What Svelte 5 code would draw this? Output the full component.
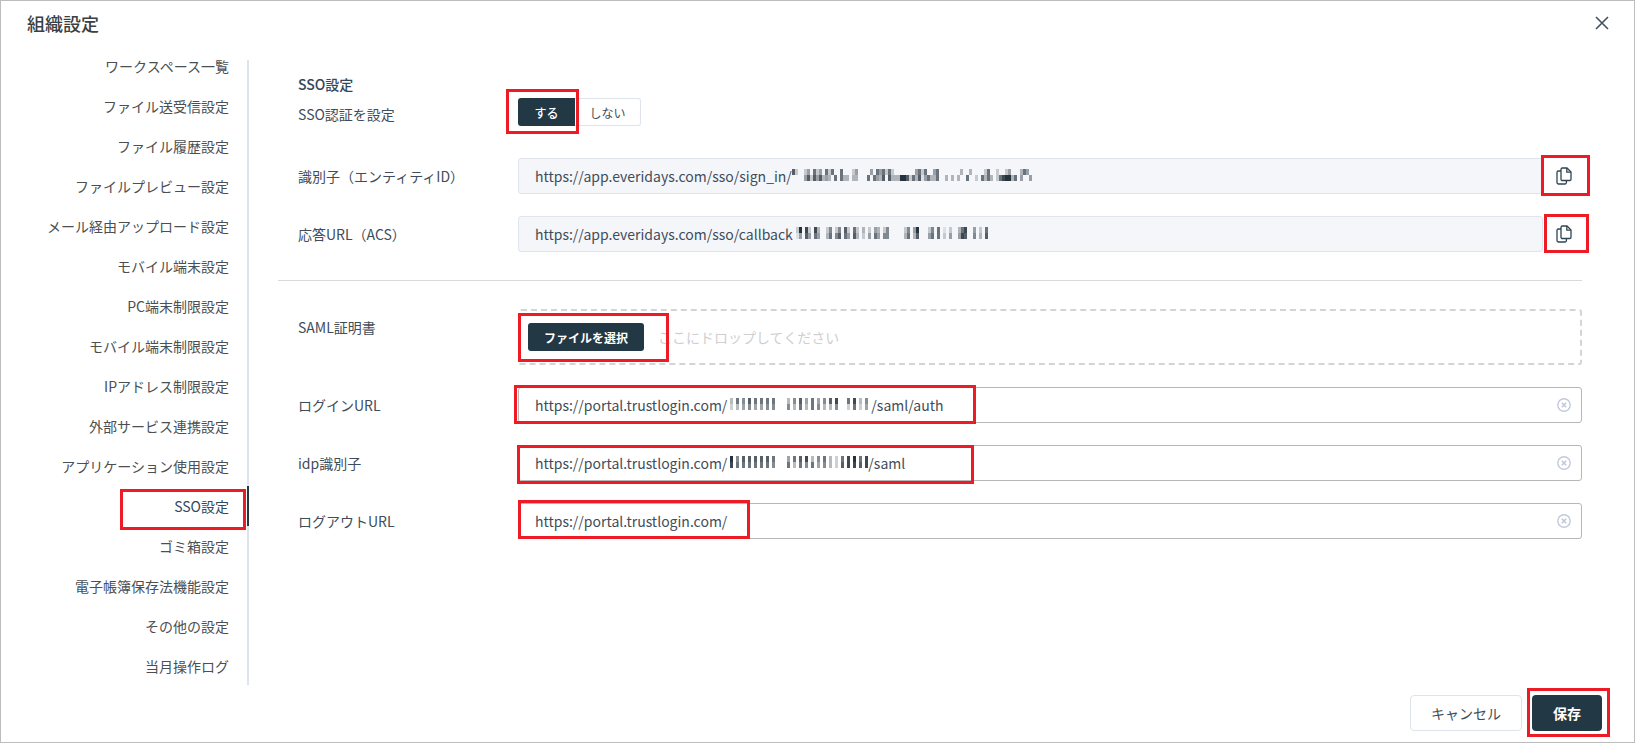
<script>
	const navItems = [
		"ワークスペース一覧", "ファイル送受信設定", "ファイル履歴設定", "ファイルプレビュー設定",
		"メール経由アップロード設定", "モバイル端末設定", "PC端末制限設定", "モバイル端末制限設定",
		"IPアドレス制限設定", "外部サービス連携設定", "アプリケーション使用設定", "SSO設定",
		"ゴミ箱設定", "電子帳簿保存法機能設定", "その他の設定", "当月操作ログ"
	]

	// blurred parts of the urls: two rows, digits are how dark each block is
	const blur1 = [
		"72002406240626006000240000406462620000000462600460000000300300002600200240003640",
		"00004727473430606330330006064370733399726371463360030303006002063630268993604004"
	]
	const blur2 = [
		"029082083002502507206203020430250000025049000250601020036800402060",
		"014074064003605706407302040640550000036037000460602040048700503070"
	]
	const blur3 = [
		"030605070606060600003050704060405070800060803050",
		"020304050404050500005030603060503030500020602040"
	]
	const blur4 = [
		"09050707070707060000406070803050603020608090608",
		"08060606060606050000603060506040503020708080708"
	]

	// red marks drawn on top of the screenshot: x, y, w, h
	const marks = [
		[506, 89, 73, 45], [1541, 155, 49, 41], [1544, 214, 45, 39],
		[518, 313, 151, 49], [514, 385, 462, 39], [517, 445, 457, 39],
		[518, 500, 232, 39], [120, 489, 126, 41], [1527, 688, 83, 49]
	]
</script>

{#snippet blur(rows)}
	<span class="blur">
		{#each rows as row}
			<span class="blur-row">
				{#each row.split("") as c}
					<i style="opacity: {Number(c) / 9}"></i>
				{/each}
			</span>
		{/each}
	</span>
{/snippet}

{#snippet copyIcon()}
	<svg width="16" height="18" viewBox="0 0 16 18" fill="none" stroke="#2f4552" stroke-width="1.3">
		<path d="M5 4H2.4A1.4 1.4 0 0 0 1 5.4V15.6A1.4 1.4 0 0 0 2.4 17H9A1.4 1.4 0 0 0 10.4 15.6V13.5" />
		<path d="M6.4 1H11L15 5V12.2A1.3 1.3 0 0 1 13.7 13.5H6.4A1.3 1.3 0 0 1 5 12.2V2.4A1.4 1.4 0 0 1 6.4 1Z" />
		<path d="M10.8 1V5.2H15" />
	</svg>
{/snippet}

{#snippet clearIcon()}
	<svg class="clear" width="14" height="14" viewBox="0 0 14 14" fill="none" stroke="#c2c9da">
		<circle cx="7" cy="7" r="6.2" stroke-width="1.4" />
		<path d="M4.8 4.8L9.2 9.2M9.2 4.8L4.8 9.2" stroke-width="1.6" />
	</svg>
{/snippet}

<div class="dialog">
	<header>
		<h1>組織設定</h1>
		<button class="close" aria-label="閉じる">
			<svg width="14" height="14" viewBox="0 0 14 14" stroke="#44525e" stroke-width="1.6">
				<path d="M1 1L13 13M13 1L1 13" />
			</svg>
		</button>
	</header>

	<div class="body">
		<nav>
			<ul>
				{#each navItems as item}
					<li class:active={item == "SSO設定"}>{item}</li>
				{/each}
			</ul>
		</nav>

		<main>
			<h2>SSO設定</h2>
			<div class="row toggle-row">
				<span class="label">SSO認証を設定</span>
				<div class="toggle">
					<button class="on">する</button>
					<button class="off">しない</button>
				</div>
			</div>

			<div class="row first-field">
				<span class="label">識別子（エンティティID）</span>
				<div class="with-copy">
					<div class="field readonly">https://app.everidays.com/sso/sign_in/{@render blur(blur1)}</div>
					<span class="copy">{@render copyIcon()}</span>
				</div>
			</div>
			<div class="row gap">
				<span class="label">応答URL（ACS）</span>
				<div class="with-copy">
					<div class="field readonly">https://app.everidays.com/sso/callback{@render blur(blur2)}</div>
					<span class="copy">{@render copyIcon()}</span>
				</div>
			</div>

			<hr />

			<div class="row saml">
				<span class="label">SAML証明書</span>
				<div class="drop">
					<button class="dark">ファイルを選択</button>
					<span>ここにドロップしてください</span>
				</div>
			</div>

			<div class="row login">
				<span class="label">ログインURL</span>
				<div class="field">https://portal.trustlogin.com/{@render blur(blur3)}/saml/auth{@render clearIcon()}</div>
			</div>
			<div class="row gap">
				<span class="label">idp識別子</span>
				<div class="field">https://portal.trustlogin.com/{@render blur(blur4)}/saml{@render clearIcon()}</div>
			</div>
			<div class="row gap">
				<span class="label">ログアウトURL</span>
				<div class="field">https://portal.trustlogin.com/{@render clearIcon()}</div>
			</div>
		</main>
	</div>

	<footer>
		<button class="cancel">キャンセル</button>
		<button class="save">保存</button>
	</footer>

	{#each marks as m}
		<div class="mark" style="left: {m[0] - 1}px; top: {m[1] - 1}px; width: {m[2]}px; height: {m[3]}px"></div>
	{/each}
</div>

<style>
	:global(body) {
		background: #fff;
	}

	.dialog {
		position: relative;
		box-sizing: border-box;
		width: 1635px;
		height: 743px;
		border: 1px solid #bdbdbd;
		display: flex;
		flex-direction: column;
		overflow: hidden;
		background: #fff;
		font-family: "Noto Sans CJK JP", "Noto Sans", sans-serif;
		font-size: 14px;
		color: #3f4d5a;
	}

	header {
		height: 59px;
		flex: none;
		display: flex;
		justify-content: space-between;
		padding: 10px 25px 0 26px;
		box-sizing: border-box;
	}

	h1 {
		margin: -1px 0 0;
		font-size: 18px;
		font-weight: 500;
		line-height: 26px;
		color: #3a3f44;
	}

	.close {
		border: 0;
		background: none;
		padding: 0;
		width: 14px;
		height: 26px;
	}

	.body {
		height: 625px;
		flex: none;
		display: flex;
	}

	nav {
		box-sizing: border-box;
		width: 248px;
		flex: none;
		border-right: 2px solid #dfe3ec;
	}

	ul {
		list-style: none;
		margin: -14px 0 0;
		padding: 0;
	}

	li {
		position: relative;
		box-sizing: border-box;
		height: 40px;
		line-height: 40px;
		padding-right: 18px;
		text-align: right;
		color: #4c4f52;
	}

	li.active {
		color: #2f4a5c;
	}

	li.active::after {
		content: "";
		position: absolute;
		top: 0;
		bottom: 0;
		right: -2px;
		width: 2px;
		background: #223844;
	}

	main {
		flex: 1;
		padding: 14px 52px 0 29px;
	}

	h2 {
		margin: 0 0 4px 20px;
		font-size: 14px;
		font-weight: 500;
		line-height: 20px;
		color: #33475a;
	}

	.row {
		display: grid;
		grid-template-columns: 240px 1fr;
		align-items: center;
	}

	.label {
		padding-left: 20px;
		line-height: 20px;
	}

	.toggle-row .label {
		padding-top: 4px;
	}

	.toggle {
		display: flex;
		height: 28px;
	}

	.toggle button {
		box-sizing: border-box;
		height: 28px;
		font: inherit;
		font-size: 12px;
		padding: 0;
	}

	.on {
		width: 57px;
		border: 0;
		border-radius: 3px 0 0 3px;
		background: #223844;
		color: #fff;
		font-weight: 500 !important;
	}

	.off {
		width: 66px;
		border: 1px solid #dfe3ec;
		border-left: 0;
		border-radius: 0 3px 3px 0;
		background: #fff;
		color: #3f4d5a;
	}

	.first-field {
		margin-top: 32px;
	}

	.gap {
		margin-top: 22px;
	}

	.with-copy {
		display: flex;
	}

	.copy {
		width: 39px;
		flex: none;
		display: flex;
		align-items: center;
		justify-content: center;
		padding-left: 2px;
		box-sizing: border-box;
	}

	.field {
		position: relative;
		flex: 1;
		box-sizing: border-box;
		height: 36px;
		padding-left: 16px;
		line-height: 34px;
		border: 1px solid #b7b7b7;
		border-radius: 3px;
		white-space: nowrap;
		display: flex;
		align-items: center;
	}

	.field.readonly {
		background: #f4f6fa;
		border-color: #e0e4ee;
	}

	.blur {
		display: inline-flex;
		flex-direction: column;
		margin-bottom: 2px;
	}

	.blur-row {
		display: flex;
		height: 6px;
	}

	.blur i {
		width: 3px;
		background: #26323c;
	}

	.clear {
		position: absolute;
		right: 10px;
		top: 10px;
	}

	hr {
		margin: 28px 0 28px;
		border: 0;
		border-top: 1px solid #d9d9d9;
	}

	.saml {
		align-items: start;
	}

	.saml .label {
		padding-top: 8px;
	}

	.drop {
		box-sizing: border-box;
		height: 56px;
		border: 2px dashed #d4d4d4;
		border-radius: 3px;
		display: flex;
		align-items: center;
		padding-left: 8px;
		gap: 14px;
		color: #cfcfcf;
	}

	.dark {
		width: 116px;
		height: 28px;
		border: 0;
		border-radius: 3px;
		background: #223844;
		color: #fff;
		font: inherit;
		font-size: 12px;
		font-weight: 700;
	}

	.login {
		margin-top: 22px;
	}

	footer {
		flex: 1;
		display: flex;
		justify-content: flex-end;
		gap: 10px;
		padding: 10px 32px 0 0;
	}

	footer button {
		height: 36px;
		border-radius: 4px;
		font: inherit;
		font-size: 14px;
	}

	.cancel {
		width: 112px;
		border: 1px solid #dfe3ec;
		background: #fff;
		color: #3f4d5a;
	}

	.save {
		width: 70px;
		border: 0;
		background: #223844;
		color: #fff;
		font-weight: 700 !important;
	}

	.mark {
		position: absolute;
		box-sizing: border-box;
		border: 3px solid #ed1c24;
		pointer-events: none;
	}
</style>
